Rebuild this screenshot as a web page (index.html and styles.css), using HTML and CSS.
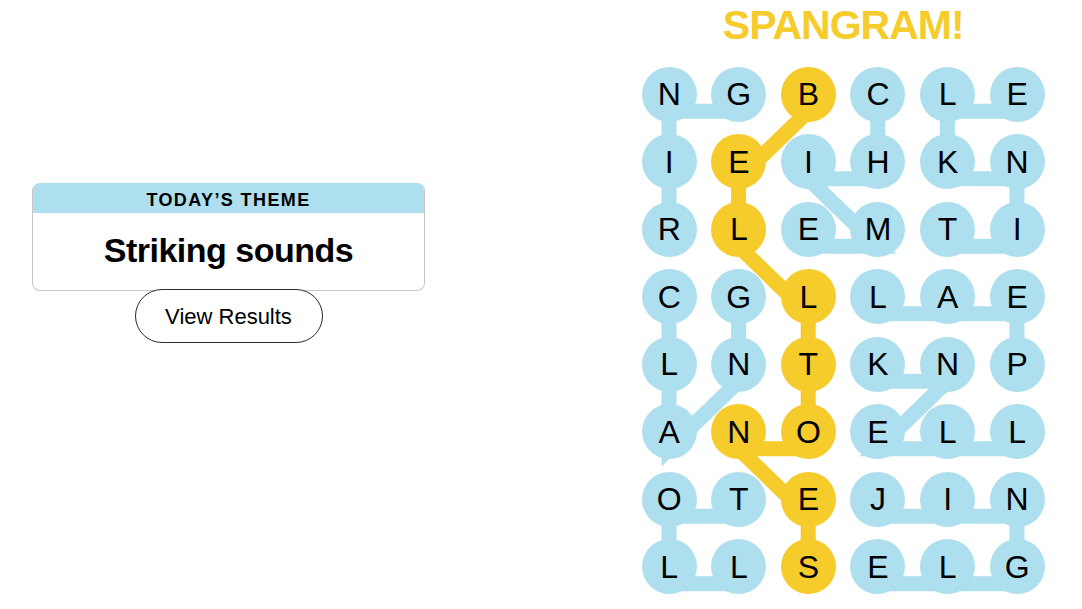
FILE: index.html
```html
<!DOCTYPE html>
<html lang="en">
<head>
<meta charset="utf-8">
<title>Strands</title>
<link rel="stylesheet" href="styles.css">
</head>
<body>
  <section class="left">
    <div class="card">
      <div class="card-head">TODAY’S THEME</div>
      <div class="card-body">Striking sounds</div>
    </div>
    <button class="btn" type="button">View Results</button>
  </section>
  <section class="right">
    <h1 class="title">SPANGRAM!</h1>
    <div class="board">
      <svg class="paths" width="418" height="540" viewBox="0 0 417.6 540">
        <g class="found">
          <polyline points="34.8,186.25 34.8,118.75 34.8,51.25 104.4,51.25"/>
          <polyline points="243.6,51.25 243.6,118.75 174,118.75 243.6,186.25 174,186.25"/>
          <polyline points="313.2,186.25 382.8,186.25 382.8,118.75 313.2,118.75 313.2,51.25 382.8,51.25"/>
          <polyline points="34.8,253.75 34.8,321.25 34.8,388.75 104.4,321.25 104.4,253.75"/>
          <polyline points="382.8,321.25 382.8,253.75 313.2,253.75 243.6,253.75"/>
          <polyline points="243.6,321.25 313.2,321.25 243.6,388.75 313.2,388.75 382.8,388.75"/>
          <polyline points="104.4,456.25 34.8,456.25 34.8,523.75 104.4,523.75"/>
          <polyline points="243.6,456.25 313.2,456.25 382.8,456.25 382.8,523.75 313.2,523.75 243.6,523.75"/>
        </g>
        <g class="spangram">
          <polyline points="174,51.25 104.4,118.75 104.4,186.25 174,253.75 174,321.25 174,388.75 104.4,388.75 174,456.25 174,523.75"/>
        </g>
      </svg>
      <div class="cell"><span class="dot">N</span></div>
      <div class="cell"><span class="dot">G</span></div>
      <div class="cell"><span class="dot gold">B</span></div>
      <div class="cell"><span class="dot">C</span></div>
      <div class="cell"><span class="dot">L</span></div>
      <div class="cell"><span class="dot">E</span></div>

      <div class="cell"><span class="dot">I</span></div>
      <div class="cell"><span class="dot gold">E</span></div>
      <div class="cell"><span class="dot">I</span></div>
      <div class="cell"><span class="dot">H</span></div>
      <div class="cell"><span class="dot">K</span></div>
      <div class="cell"><span class="dot">N</span></div>

      <div class="cell"><span class="dot">R</span></div>
      <div class="cell"><span class="dot gold">L</span></div>
      <div class="cell"><span class="dot">E</span></div>
      <div class="cell"><span class="dot">M</span></div>
      <div class="cell"><span class="dot">T</span></div>
      <div class="cell"><span class="dot">I</span></div>

      <div class="cell"><span class="dot">C</span></div>
      <div class="cell"><span class="dot">G</span></div>
      <div class="cell"><span class="dot gold">L</span></div>
      <div class="cell"><span class="dot">L</span></div>
      <div class="cell"><span class="dot">A</span></div>
      <div class="cell"><span class="dot">E</span></div>

      <div class="cell"><span class="dot">L</span></div>
      <div class="cell"><span class="dot">N</span></div>
      <div class="cell"><span class="dot gold">T</span></div>
      <div class="cell"><span class="dot">K</span></div>
      <div class="cell"><span class="dot">N</span></div>
      <div class="cell"><span class="dot">P</span></div>

      <div class="cell"><span class="dot">A</span></div>
      <div class="cell"><span class="dot gold">N</span></div>
      <div class="cell"><span class="dot gold">O</span></div>
      <div class="cell"><span class="dot">E</span></div>
      <div class="cell"><span class="dot">L</span></div>
      <div class="cell"><span class="dot">L</span></div>

      <div class="cell"><span class="dot">O</span></div>
      <div class="cell"><span class="dot">T</span></div>
      <div class="cell"><span class="dot gold">E</span></div>
      <div class="cell"><span class="dot">J</span></div>
      <div class="cell"><span class="dot">I</span></div>
      <div class="cell"><span class="dot">N</span></div>

      <div class="cell"><span class="dot">L</span></div>
      <div class="cell"><span class="dot">L</span></div>
      <div class="cell"><span class="dot gold">S</span></div>
      <div class="cell"><span class="dot">E</span></div>
      <div class="cell"><span class="dot">L</span></div>
      <div class="cell"><span class="dot">G</span></div>
    </div>
  </section>
</body>
</html>
```

FILE: styles.css
```css
html, body {
  margin: 0;
  padding: 0;
  background: #ffffff;
}

body {
  width: 1082px;
  height: 609px;
  overflow: hidden;
  display: flex;
  font-family: "Liberation Sans", Arial, sans-serif;
  color: #000000;
}

.left {
  width: 457px;
  box-sizing: border-box;
  padding-top: 183px;
  display: flex;
  flex-direction: column;
  align-items: center;
}

.card {
  width: 393px;
  box-sizing: border-box;
  border: 1px solid #c6c6c6;
  border-top: 0;
  border-radius: 8px;
  overflow: hidden;
  background: #ffffff;
}

.card-head {
  height: 30px;
  box-sizing: border-box;
  padding-top: 4px;
  background: #aedfee;
  display: flex;
  align-items: center;
  justify-content: center;
  font-size: 18px;
  font-weight: 700;
  letter-spacing: 1.4px;
}

.card-body {
  padding: 20px 0 23px;
  text-align: center;
  font-size: 34px;
  line-height: 34px;
  font-weight: 700;
  letter-spacing: -0.5px;
}

.btn {
  position: relative;
  margin-top: -2px;
  width: 188px;
  height: 54px;
  box-sizing: border-box;
  padding: 2px 0 0;
  border: 1px solid #2a2a2a;
  border-radius: 27px;
  background: #ffffff;
  color: #000000;
  font-family: "Liberation Sans", Arial, sans-serif;
  font-size: 22px;
  display: flex;
  align-items: center;
  justify-content: center;
}

.right {
  margin-left: 177.4px;
  width: 417.6px;
  display: flex;
  flex-direction: column;
  align-items: center;
}

.title {
  margin: 4.7px 0 0;
  font-size: 41px;
  line-height: 41px;
  font-weight: 700;
  letter-spacing: -1px;
  color: #f6cb2c;
}

.board {
  position: relative;
  margin-top: 14.75px;
  display: grid;
  grid-template-columns: repeat(6, 69.6px);
  grid-template-rows: repeat(8, 67.5px);
}

.paths {
  position: absolute;
  left: 0;
  top: 0;
  overflow: visible;
  z-index: 0;
}

.paths polyline {
  fill: none;
  stroke-width: 15;
  stroke-linejoin: miter;
  stroke-linecap: butt;
}

.found polyline {
  stroke: #aedfee;
}

.spangram polyline {
  stroke: #f6cb2c;
}

.cell {
  position: relative;
  z-index: 1;
  display: flex;
  align-items: center;
  justify-content: center;
}

.dot {
  width: 55px;
  height: 55px;
  border-radius: 50%;
  background: #aedfee;
  display: flex;
  align-items: center;
  justify-content: center;
  font-size: 32px;
  line-height: 1;
}

.dot.gold {
  background: #f6cb2c;
}
```
